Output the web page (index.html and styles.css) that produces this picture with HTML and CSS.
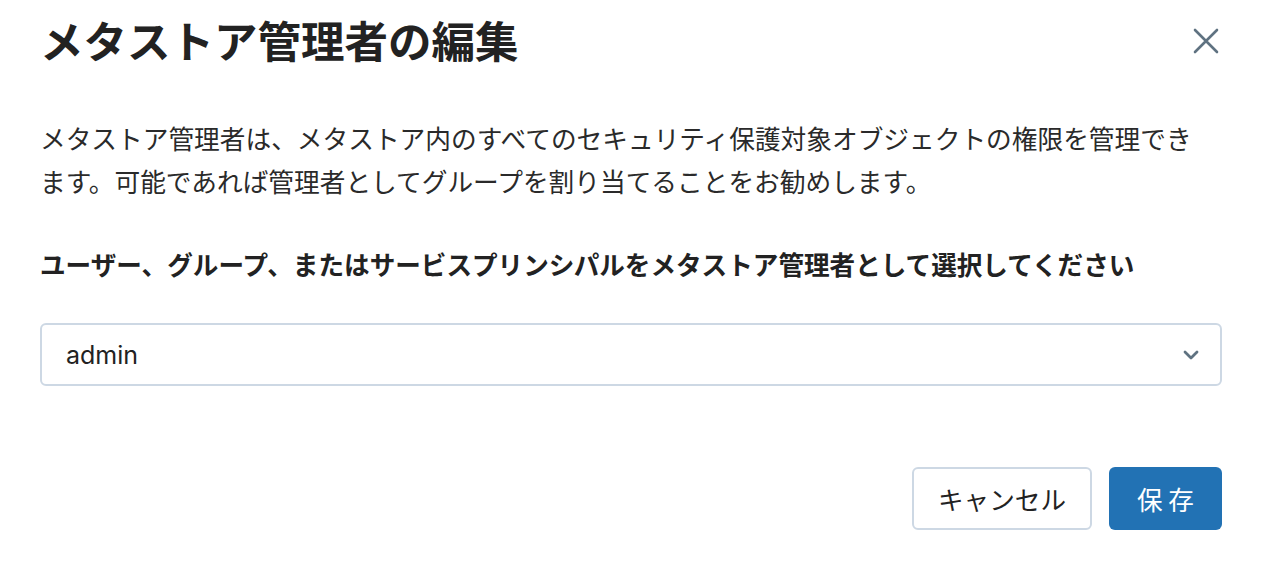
FILE: index.html
```html
<!DOCTYPE html>
<html lang="ja">
<head>
<meta charset="utf-8">
<link rel="stylesheet" href="styles.css">
</head>
<body>
<div class="dialog">
  <div class="header">
    <h1 class="title">メタストア管理者の編集</h1>
    <button class="close" aria-label="close">
      <svg width="26" height="26" viewBox="0 0 26 26"><path d="M2 2 L24 24 M24 2 L2 24" stroke="#5f7281" stroke-width="2.6" stroke-linecap="round" fill="none"/></svg>
    </button>
  </div>
  <p class="desc">メタストア管理者は、メタストア内のすべてのセキュリティ保護対象オブジェクトの権限を管理できます。可能であれば管理者としてグループを割り当てることをお勧めします。</p>
  <div class="label">ユーザー、グループ、またはサービスプリンシパルをメタストア管理者として選択してください</div>
  <div class="select">
    <span class="value">admin</span>
    <svg width="16" height="10" viewBox="0 0 16 10"><path d="M2 2 L8 8 L14 2" stroke="#5f7281" stroke-width="2.8" fill="none" stroke-linecap="round" stroke-linejoin="round"/></svg>
  </div>
  <div class="footer">
    <button class="btn cancel">キャンセル</button>
    <button class="btn save">保 存</button>
  </div>
</div>
</body>
</html>
```
FILE: styles.css
```css
html, body {
  margin: 0;
  padding: 0;
  background: #fff;
}
body {
  font-family: "Noto Sans CJK JP", "Noto Sans", sans-serif;
  color: #222;
}
.dialog {
  padding: 12px 40px 0 40px;
  display: flex;
  flex-direction: column;
}
.header {
  display: flex;
  justify-content: space-between;
  align-items: center;
  height: 56px;
}
.title {
  margin: 0;
  font-size: 43.5px;
  font-weight: 700;
  line-height: 56px;
  color: #222;
}
.close {
  border: 0;
  background: none;
  padding: 0;
  margin-right: 3px;
  margin-top: 2px;
  display: flex;
  width: 26px;
  height: 26px;
}
.desc {
  margin: 48px 0 0 0;
  padding-right: 20px;
  font-size: 25.7px;
  line-height: 43px;
  color: #2a2a2a;
}
.label {
  margin-top: 42px;
  font-size: 25.6px;
  font-weight: 700;
  line-height: 40px;
  color: #222;
}
.select {
  margin-top: 39px;
  height: 59px;
  border: 2px solid #cdd8e4;
  border-radius: 6px;
  display: flex;
  align-items: center;
  justify-content: space-between;
  padding: 0 21px 0 24px;
}
.value {
  font-family: "Inter", "Liberation Sans", sans-serif;
  font-size: 25px;
  color: #222;
}
.footer {
  margin-top: 81px;
  display: flex;
  justify-content: flex-end;
  gap: 17px;
}
.btn {
  height: 63px;
  border-radius: 6px;
  font-family: "Noto Sans CJK JP", sans-serif;
  font-size: 25.6px;
  padding: 0;
  cursor: pointer;
}
.cancel {
  width: 180px;
  background: #fff;
  border: 2px solid #cdd8e4;
  color: #222;
}
.save {
  width: 113px;
  background: #2272b4;
  border: 0;
  color: #fff;
}
```
